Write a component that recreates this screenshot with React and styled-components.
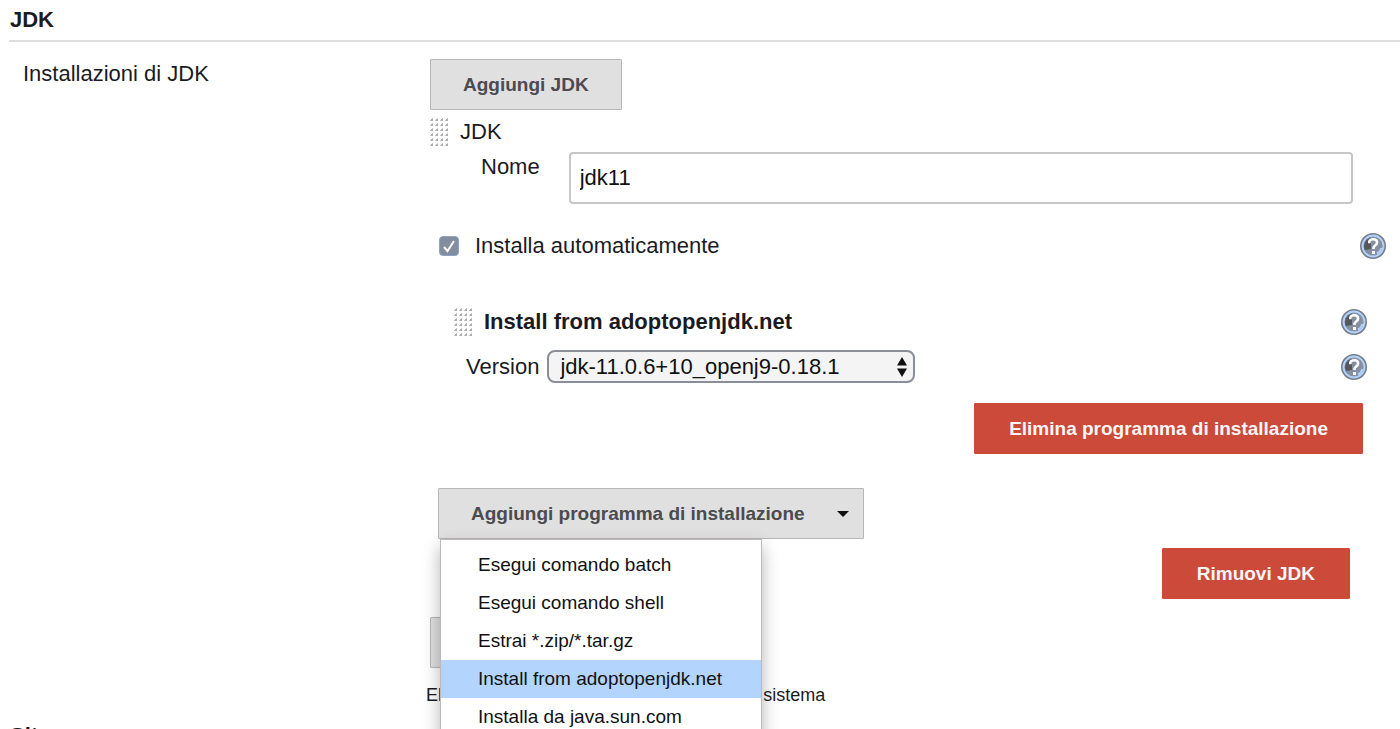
import React from 'react';
import styled, { createGlobalStyle } from 'styled-components';

const GlobalStyle = createGlobalStyle`
  *, *::before, *::after { box-sizing: border-box; }
  body {
    margin: 0;
    background: #fff;
    color: #1b1b1f;
    font-family: "Liberation Sans", Arial, Helvetica, sans-serif;
    font-size: 22px;
    line-height: 30px;
  }
  button, input, select { font: inherit; color: inherit; margin: 0; }
`;

const Page = styled.main`
  overflow: hidden;
`;

const SectionTitle = styled.h2`
  margin: 0 0 0 9px;
  height: 42px;
  padding-left: 1px;
  border-bottom: 2px solid #dedede;
  font-size: 22px;
  line-height: 40px;
`;

const Section = styled.section`
  display: grid;
  grid-template-columns: 407px 1fr;
  padding: 17px 0 9px 23px;
`;

const SectionLabel = styled.div``;

const Content = styled.div`
  min-width: 0;
`;

const Button = styled.button`
  display: inline-flex;
  align-items: center;
  justify-content: center;
  gap: 32px;
  height: 51px;
  padding: 0 ${(p) => (p.$menu ? '14px' : p.$danger ? '34px' : '32px')} 0 ${(p) => (p.$danger ? '34px' : '32px')};
  border: 1px solid ${(p) => (p.$danger ? '#cc4a3a' : '#b9b6b9')};
  border-radius: 1px;
  background: ${(p) => (p.$danger ? '#cc4a3a' : '#e0e0e0')};
  color: ${(p) => (p.$danger ? '#f6f6f6' : '#4b4b50')};
  font-size: 19px;
  font-weight: bold;
  white-space: nowrap;
`;

const Row = styled.div`
  display: flex;
  align-items: center;
  gap: ${(p) => p.$gap || 12}px;
  height: 30px;
  margin-top: ${(p) => p.$top}px;
  padding: 0 ${(p) => p.$right || 0}px 0 ${(p) => p.$left || 0}px;
`;

const InstallerTitle = styled.h3`
  margin: 0;
  font-size: 22px;
`;

const FieldRow = styled.div`
  display: flex;
  align-items: ${(p) => p.$align || 'flex-start'};
  gap: ${(p) => p.$gap}px;
  margin-top: ${(p) => p.$top}px;
  padding: 0 ${(p) => p.$right}px 0 ${(p) => p.$left}px;
`;

const FieldLabel = styled.label`
  flex: none;
`;

const TextInput = styled.input`
  flex: 1;
  min-width: 0;
  height: 52px;
  padding: 0 9px;
  border: 2px solid #c8c6c8;
  border-radius: 4px;
  background: #fff;
  color: #111;
`;

const Actions = styled.div`
  display: flex;
  justify-content: ${(p) => (p.$end ? 'flex-end' : 'flex-start')};
  margin-top: ${(p) => p.$top || 0}px;
  padding: 0 ${(p) => p.$right || 0}px 0 ${(p) => p.$left || 0}px;
`;

const Stack = styled.span`
  display: grid;
  flex: none;
  align-items: center;
  > * { grid-area: 1 / 1; }
  > svg { pointer-events: none; justify-self: ${(p) => p.$mark || 'center'}; }
`;

const Checkbox = styled.input`
  appearance: none;
  width: 20px;
  height: 20px;
  border: 1px solid #8ba3c4;
  border-radius: 4px;
  background: #848d9d;
`;

const Select = styled.select`
  appearance: none;
  width: 368px;
  height: 33px;
  padding: 0 32px 0 11px;
  border: 2px solid #8b8d99;
  border-radius: 8px;
  background: #f4f4f4;
  color: #111;
`;

const SelectArrows = styled.svg`
  margin-right: 7px;
`;

const HelpButton = styled.button`
  display: flex;
  flex: none;
  margin-left: auto;
  padding: 0;
  border: 0;
  background: none;
`;

const MenuAnchor = styled.div`
  position: relative;
`;

const Menu = styled.ul`
  position: absolute;
  z-index: 1;
  top: 100%;
  left: 2px;
  width: 322px;
  margin: 0;
  padding: 6px 0;
  border: 1px solid #bcb8bc;
  background: #fff;
  box-shadow: 0 8px 16px rgba(0, 0, 0, 0.3);
  list-style: none;
`;

const MenuItem = styled.button`
  display: block;
  width: 100%;
  height: 38px;
  padding: 0 37px;
  border: 0;
  background: ${(p) => (p.$active ? '#b3d5fd' : 'transparent')};
  color: #111;
  font-size: 19px;
  text-align: left;
  white-space: nowrap;
`;

const Description = styled.p`
  margin: 15px 0 0 -4px;
  font-size: 18px;
  line-height: 24px;
`;

function Grip() {
  const dots = [];
  for (let y = 0; y < 6; y += 1) {
    for (let x = 0; x < 4; x += 1) {
      dots.push(
        <g key={`${x}-${y}`}>
          <path d={`M${x * 5} ${y * 5 + 2}h1v-1h1v-1h1v3h-3z`} fill="#c9c6c9" />
          <rect x={x * 5 + 1} y={y * 5 + 1} width="2" height="2" fill="#b0adb0" />
        </g>
      );
    }
  }
  return <svg width="18" height="28" viewBox="0 0 18 28" aria-hidden="true">{dots}</svg>;
}

function Help({ label }) {
  return (
    <HelpButton type="button" aria-label={label}>
      <svg width="26" height="26" viewBox="0 0 26 26" fill="none" aria-hidden="true">
        <circle cx="13" cy="13" r="12.200" fill="#b3d3fb" stroke="#777d89" strokeWidth="1.600" />
        <circle cx="13" cy="13" r="9" fill="#868f9f" stroke="#868f9f" strokeWidth="1.200" />
        <path d="M11 4.500A8.800 8.800 0 0 0 5 17l6-1V11Z" fill="#55575f" />
        <path d="M17 20.500a9 9 0 0 0 4.500-5.500" stroke="#b3d3fb" strokeWidth="2" />
        <path d="M9.300 10.200V8.500C9.800 6.800 11.300 6.300 13.200 6.300c2.400 0 3.900 1.200 3.900 3.200 0 2.900-3.600 2.900-3.600 5.300v1.200" stroke="#fff" strokeWidth="2.600" />
        <rect x="12" y="18" width="3" height="3" fill="#fff" />
      </svg>
    </HelpButton>
  );
}

const INSTALLERS = [
  'Esegui comando batch',
  'Esegui comando shell',
  'Estrai *.zip/*.tar.gz',
  'Install from adoptopenjdk.net',
  'Installa da java.sun.com',
];

export default function App() {
  return (
    <Page>
      <GlobalStyle />
      <SectionTitle>JDK</SectionTitle>
      <Section>
        <SectionLabel>Installazioni di JDK</SectionLabel>
        <Content>
          <Actions>
            <Button type="button">Aggiungi JDK</Button>
          </Actions>
          <Row $top={7}>
            <Grip />
            JDK
          </Row>
          <FieldRow $top={5} $left={51} $right={47} $gap={29}>
            <FieldLabel htmlFor="jdk-name">Nome</FieldLabel>
            <TextInput id="jdk-name" type="text" defaultValue="jdk11" />
          </FieldRow>
          <Row $top={27} $left={9} $right={14} $gap={16}>
            <Stack>
              <Checkbox id="auto-install" type="checkbox" defaultChecked />
              <svg width="14" height="14" viewBox="0 0 14 14" fill="none" aria-hidden="true">
                <path d="M2 8l3.500 4L12 2" stroke="#fff" strokeWidth="2" />
              </svg>
            </Stack>
            <label htmlFor="auto-install">Installa automaticamente</label>
            <Help label="Aiuto: Installa automaticamente" />
          </Row>
          <Row $top={46} $left={24} $right={33}>
            <Grip />
            <InstallerTitle>Install from adoptopenjdk.net</InstallerTitle>
            <Help label="Aiuto: Install from adoptopenjdk.net" />
          </Row>
          <FieldRow $top={13} $left={36} $right={33} $gap={8} $align="center">
            <FieldLabel htmlFor="jdk-version">Version</FieldLabel>
            <Stack $mark="end">
              <Select id="jdk-version" defaultValue="jdk-11.0.6+10_openj9-0.18.1">
                <option>jdk-11.0.6+10_openj9-0.18.1</option>
              </Select>
              <SelectArrows width="12" height="22" viewBox="0 0 12 22" aria-hidden="true">
                <path d="M6 1l5 8.500H1Z M6 21l5-8.500H1Z" fill="#111" />
              </SelectArrows>
            </Stack>
            <Help label="Aiuto: Version" />
          </FieldRow>
          <Actions $end $top={20} $right={37}>
            <Button type="button" $danger>Elimina programma di installazione</Button>
          </Actions>
          <Actions $top={34} $left={8}>
            <MenuAnchor>
              <Button type="button" $menu aria-haspopup="menu" aria-expanded="true">
                Aggiungi programma di installazione
                <svg width="12" height="6" viewBox="0 0 12 6" aria-hidden="true">
                  <path d="M0 0h12L6 6Z" fill="#111" />
                </svg>
              </Button>
              <Menu>
                {INSTALLERS.map((name) => (
                  <li key={name}>
                    <MenuItem type="button" $active={name.startsWith('Install from')}>{name}</MenuItem>
                  </li>
                ))}
              </Menu>
            </MenuAnchor>
          </Actions>
          <Actions $end $top={9} $right={50}>
            <Button type="button" $danger>Rimuovi JDK</Button>
          </Actions>
          <Actions $top={18}>
            <Button type="button">Aggiungi JDK</Button>
          </Actions>
          <Description>Elenco delle installazioni di JDK in questo sistema</Description>
        </Content>
      </Section>
      <SectionTitle>Site</SectionTitle>
    </Page>
  );
}
